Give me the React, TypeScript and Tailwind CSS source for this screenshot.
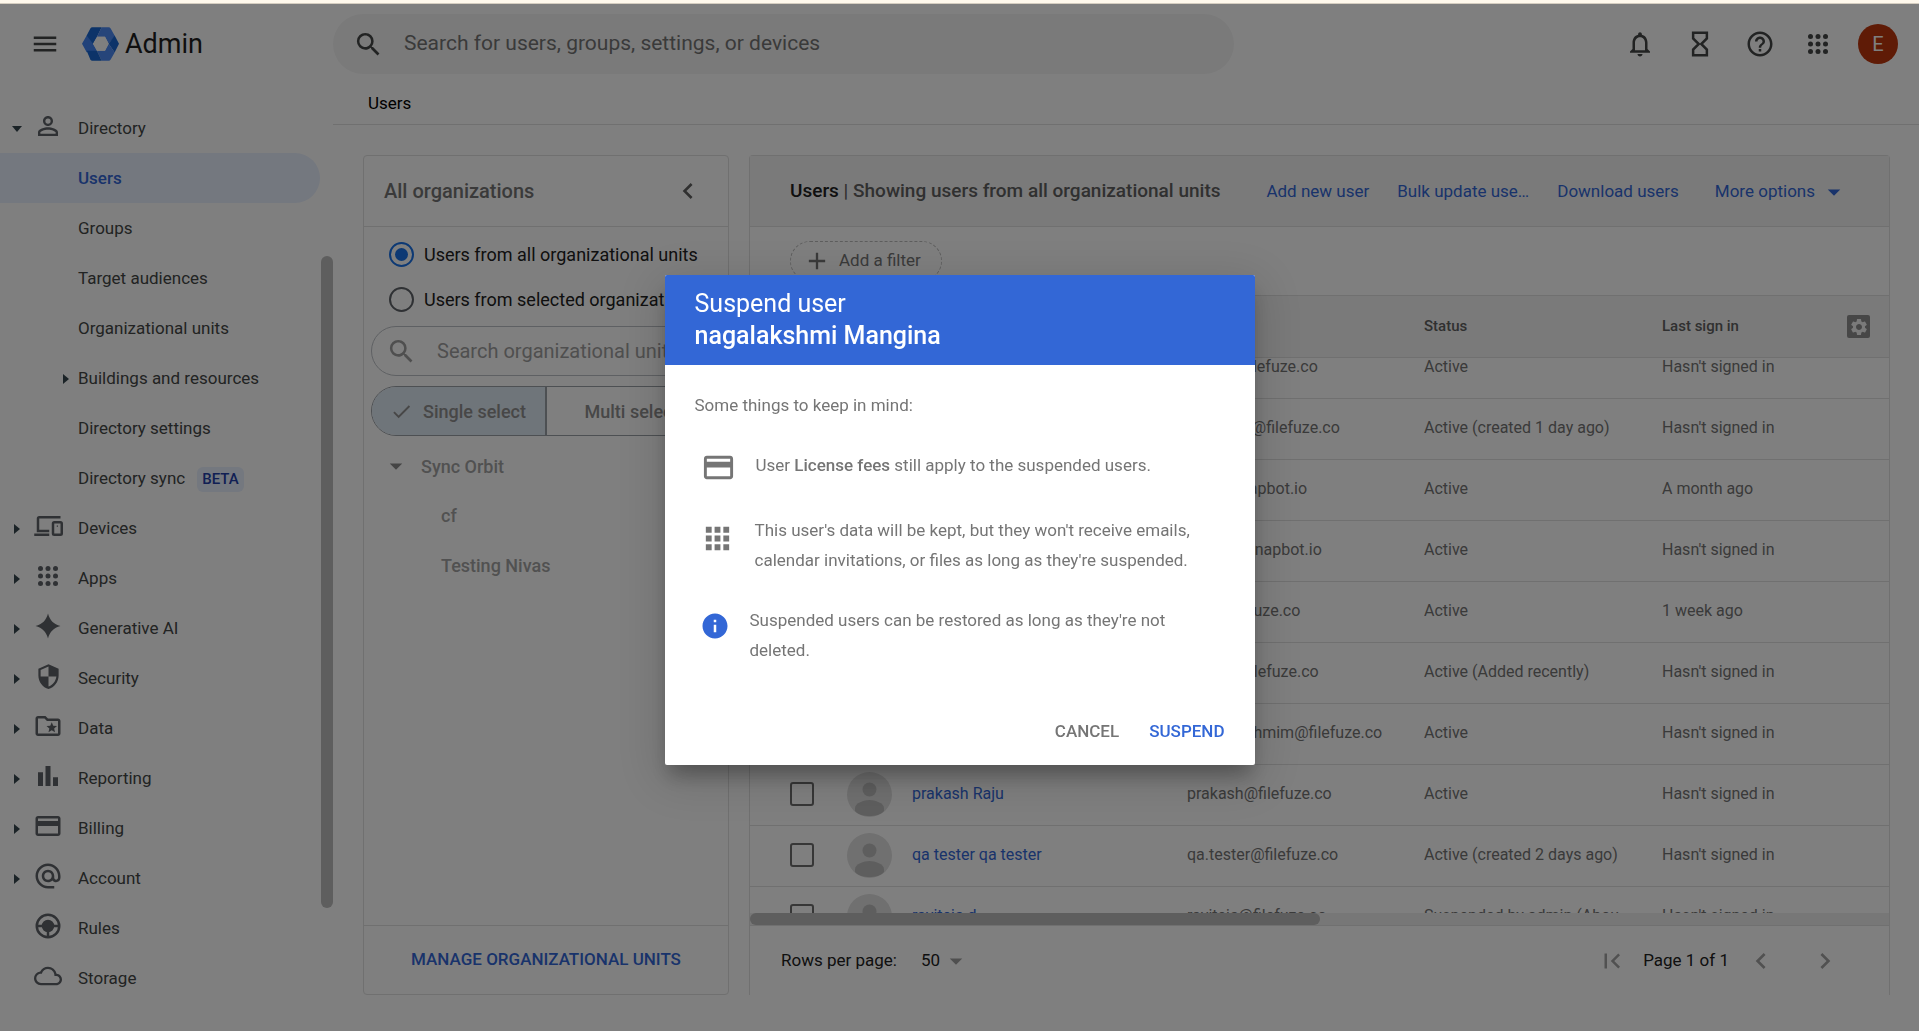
import { useLayoutEffect, useRef } from "react";
import type { ReactNode } from "react";
import clsx from "clsx";
import {
  MdAdd,
  MdAlternateEmail,
  MdApps,
  MdArrowDropDown,
  MdCheck,
  MdChevronLeft,
  MdChevronRight,
  MdCloudQueue,
  MdCreditCard,
  MdFirstPage,
  MdHelpOutline,
  MdInfo,
  MdMenu,
  MdNotificationsNone,
  MdOutlineFolderSpecial,
  MdPersonOutline,
  MdSearch,
  MdSecurity,
  MdSettings,
} from "react-icons/md";

const DotsIcon = () => (
  <svg width="30" height="30" viewBox="0 0 24 24" fill="currentColor">
    {[6, 12, 18].map((y) =>
      [6, 12, 18].map((x) => <circle key={`${x}-${y}`} cx={x} cy={y} r="2" />)
    )}
  </svg>
);

const SparkIcon = () => (
  <svg width="30" height="30" viewBox="0 0 24 24" fill="currentColor">
    <path d="M12 2c1.500 5.500 4.500 8.500 10 10-5.500 1.500-8.500 4.500-10 10-1.500-5.500-4.500-8.500-10-10 5.500-1.500 8.500-4.500 10-10z" />
  </svg>
);

const BarsIcon = () => (
  <svg width="30" height="30" viewBox="0 0 24 24" fill="currentColor">
    <path d="M4 9h4v11H4zM10 4h4v16h-4zM16 13h4v7h-4z" />
  </svg>
);

// laptop outline with a small phone in front of it
const DevicesIcon = () => (
  <svg
    width="30"
    height="30"
    viewBox="0 0 24 24"
    fill="none"
    stroke="currentColor"
    strokeWidth="2"
  >
    <path d="M22 5H5a1 1 0 0 0-1 1v11M1 19h12M4 16h9" />
    <rect x="16" y="9" width="7" height="10" rx="1" />
    <path d="M19 12h1" strokeWidth="1" />
  </svg>
);

const WheelIcon = () => (
  <svg
    width="30"
    height="30"
    viewBox="0 0 24 24"
    fill="none"
    stroke="currentColor"
    strokeWidth="2"
  >
    <circle cx="12" cy="12" r="9" />
    <path d="M3 12h18M12 12v9" />
    <circle cx="12" cy="12" r="4" fill="currentColor" />
  </svg>
);

const HourglassIcon = () => (
  <svg
    width="30"
    height="30"
    viewBox="0 0 24 24"
    fill="none"
    stroke="currentColor"
    strokeWidth="2"
  >
    <path d="M6.500 3h11v4.500L13 12l4.500 4.500V21h-11v-4.500L11 12 6.500 7.500z" />
  </svg>
);

const Logo = () => (
  <svg width="37" height="34" viewBox="0 0 111 101">
    <path fill="#4285f4" d="M0 50l14-25 31 4-12 21 12 21-31 4z" />
    <path fill="#1967d2" d="M14 25L25 4q2-4 6-4h28L45 29 33 50z" />
    <path fill="#4c8bf5" d="M59 0h21q4 0 6 4l13 23-19 23-11-21H45z" />
    <path fill="#1967d2" d="M98 25l13 25-13 26-18-26z" />
    <path fill="#4c8bf5" d="M80 50l18 26-12 21q-2 4-6 4H59L45 71h24z" />
    <path fill="#1967d2" d="M14 71h31l14 30H31q-4 0-6-4z" />
    <path fill="#fff" d="M33 50l12-21h24l11 21-11 21H45z" />
  </svg>
);

const Caret = ({ open }: { open?: boolean }) => (
  <svg width="10" height="10" viewBox="0 0 10 10" fill="#37474f">
    {open ? <path d="M0 2h10L5 8z" /> : <path d="M2 0v10l6-5z" />}
  </svg>
);

const PersonAvatar = () => (
  <svg width="45" height="45" viewBox="0 0 45 45">
    <clipPath id="face">
      <circle cx="22.500" cy="22.500" r="22.500" />
    </clipPath>
    <circle cx="22.500" cy="22.500" r="22.500" fill="#e0e0e0" />
    <g clipPath="url(#face)" fill="#bdbdbd">
      <circle cx="22.500" cy="17.500" r="7" />
      <path d="M8 39v-3c0-5 9-8 14.500-8S37 31 37 36v3c-3 4-9 5-14.500 5S11 43 8 39z" />
    </g>
  </svg>
);

type NavItem = {
  label: string;
  icon?: ReactNode;
  caret?: "open" | "closed";
  active?: boolean;
  beta?: boolean;
};

const navItems: NavItem[] = [
  { label: "Directory", icon: <MdPersonOutline size={30} />, caret: "open" },
  { label: "Users", active: true },
  { label: "Groups" },
  { label: "Target audiences" },
  { label: "Organizational units" },
  { label: "Buildings and resources", caret: "closed" },
  { label: "Directory settings" },
  { label: "Directory sync", beta: true },
  { label: "Devices", icon: <DevicesIcon />, caret: "closed" },
  { label: "Apps", icon: <DotsIcon />, caret: "closed" },
  { label: "Generative AI", icon: <SparkIcon />, caret: "closed" },
  { label: "Security", icon: <MdSecurity size={27} />, caret: "closed" },
  { label: "Data", icon: <MdOutlineFolderSpecial size={30} />, caret: "closed" },
  { label: "Reporting", icon: <BarsIcon />, caret: "closed" },
  { label: "Billing", icon: <MdCreditCard size={30} />, caret: "closed" },
  { label: "Account", icon: <MdAlternateEmail size={30} />, caret: "closed" },
  { label: "Rules", icon: <WheelIcon /> },
  { label: "Storage", icon: <MdCloudQueue size={28} /> },
];

const users = [
  ["Pavan Kumar", "pavan@filefuze.co", "Active", "Hasn't signed in"],
  ["nagalakshmi Mangina", "praveena@filefuze.co", "Active (created 1 day ago)", "Hasn't signed in"],
  ["Abhi R", "abhi@snapbot.io", "Active", "A month ago"],
  ["Kumar S", "kumar@snapbot.io", "Active", "Hasn't signed in"],
  ["Ravi K", "ravi@filefuze.co", "Active", "1 week ago"],
  ["Kishor P", "kishor@filefuze.co", "Active (Added recently)", "Hasn't signed in"],
  ["Sultana Tahmim", "sultanatahmim@filefuze.co", "Active", "Hasn't signed in"],
  ["prakash Raju", "prakash@filefuze.co", "Active", "Hasn't signed in"],
  ["qa tester qa tester", "qa.tester@filefuze.co", "Active (created 2 days ago)", "Hasn't signed in"],
  ["raviteja d", "raviteja@filefuze.co", "Suspended by admin (About 1 month ago)", "Hasn't signed in"],
];

const Header = () => (
  <header className="flex h-20 shrink-0 items-center">
    <div className="flex w-[333px] shrink-0 items-center pl-[30px]">
      <button aria-label="Main menu" className="text-[#444746]">
        <MdMenu size={30} />
      </button>
      <a href="#" className="ml-[22px] flex items-center gap-1.5">
        <Logo />
        <span className="text-[27px] leading-8 text-[#1f1f1f]">Admin</span>
      </a>
    </div>
    <div className="flex h-[60px] w-[901px] items-center rounded-full bg-[#f5f5f5] pl-5">
      <MdSearch size={31} className="text-[#444746]" />
      <input
        aria-label="Search"
        placeholder="Search for users, groups, settings, or devices"
        className="ml-5 flex-1 bg-transparent text-[21px] text-[#1f1f1f] outline-none placeholder:text-[#757575]"
      />
    </div>
    <div className="ml-auto flex items-center gap-7 pr-[21px] text-[#444746]">
      <div className="flex items-center gap-[30px]">
        <button aria-label="Notifications">
          <MdNotificationsNone size={30} />
        </button>
        <button aria-label="Tasks">
          <HourglassIcon />
        </button>
        <button aria-label="Help">
          <MdHelpOutline size={30} />
        </button>
      </div>
      <div className="flex items-center gap-[25px]">
        <button aria-label="Google apps">
          <DotsIcon />
        </button>
        <button className="size-10 rounded-full bg-[#bf360c] text-xl text-white">
          E
        </button>
      </div>
    </div>
  </header>
);

const Sidebar = () => (
  <div className="flex w-[333px] shrink-0 justify-between overflow-hidden">
    <nav className="w-80 pt-[19px]">
      {navItems.map(({ label, icon, caret, active, beta }) => (
        <a
          key={label}
          href="#"
          className={clsx(
            "flex h-[50px] items-center rounded-r-full pt-0.5 text-[17px]",
            active
              ? "bg-[#e8f0fe] font-medium text-[#3367d6]"
              : "text-[#444746]"
          )}
        >
          {icon || !caret ? (
            <>
              <span className="flex w-[33px] justify-center">
                {caret && <Caret open={caret === "open"} />}
              </span>
              <span className="mb-1.5 flex w-[30px] justify-center text-[#5f6368]">
                {icon}
              </span>
              <span className="w-[15px]" />
            </>
          ) : (
            <span className="flex w-[78px] justify-end pr-[7px]">
              <Caret />
            </span>
          )}
          {label}
          {beta && (
            <span className="ml-3 rounded-md bg-[#e8f0fe] px-[5px] text-[15px] leading-[25px] font-medium text-[#233fa9]">
              BETA
            </span>
          )}
        </a>
      ))}
    </nav>
    <div className="w-3 pt-[172px]">
      <div className="h-[652px] rounded-full bg-[#bcbcbc]" />
    </div>
  </div>
);

const OrgPanel = () => (
  <section className="flex w-[366px] shrink-0 flex-col rounded border border-[#e0e0e0]">
    <div className="flex h-[71px] items-center justify-between border-b border-[#e0e0e0] pr-6 pl-5">
      <h2 className="text-xl font-medium text-[#757575]">All organizations</h2>
      <button aria-label="Collapse" className="text-[#616161]">
        <MdChevronLeft size={32} />
      </button>
    </div>
    <div className="flex flex-1 flex-col px-[7px] pt-[5px]">
      {["Users from all organizational units", "Users from selected organizational units"].map(
        (label, i) => (
          <label
            key={label}
            className="flex h-[45px] items-center gap-2.5 pl-[18px] text-[18px] whitespace-nowrap text-[#212121]"
          >
            <input
              type="radio"
              name="scope"
              defaultChecked={i === 0}
              className="grid size-[25px] shrink-0 appearance-none place-items-center rounded-full border-2 border-[#5f6368] checked:border-[#1a73e8] checked:before:size-[13px] checked:before:rounded-full checked:before:bg-[#1a73e8] checked:before:content-['']"
            />
            <span>{label}</span>
          </label>
        )
      )}
      <div className="mt-1 flex h-[50px] shrink-0 items-center rounded-full border border-[#bdc1c6] pl-3.5 text-[#9e9e9e]">
        <MdSearch size={31} />
        <input
          aria-label="Search organizational units"
          placeholder="Search organizational units"
          className="ml-5 min-w-0 flex-1 bg-transparent text-xl outline-none placeholder:text-[#9e9e9e]"
        />
      </div>
      <div className="mt-2.5 flex h-[50px] shrink-0 overflow-hidden rounded-full border border-[#9aa0a6] text-[18px] font-medium text-[#8f8f8f]">
        <button className="flex w-[175px] items-center border-r-2 border-[#9aa0a6] bg-[#dfeaf4] pl-[18px]">
          <MdCheck size={23} />
          <span className="ml-2.5">Single select</span>
        </button>
        <button className="flex-1 pr-1">Multi select</button>
      </div>
      <ul className="mt-1.5 text-[18px] font-medium text-[#a3a3a3]">
        <li>
          <span className="flex h-12 items-center">
            <MdArrowDropDown size={30} className="ml-2.5 text-[#8a8a8a]" />
            <span className="ml-2.5">Sync Orbit</span>
          </span>
          <ul className="pl-[70px]">
            <li className="flex h-[50px] items-center">cf</li>
            <li className="flex h-[50px] items-center">Testing Nivas</li>
          </ul>
        </li>
      </ul>
    </div>
    <div className="flex h-[69px] items-center justify-center border-t border-[#e0e0e0]">
      <button className="text-[17px] font-medium text-[#3367d6]">
        MANAGE ORGANIZATIONAL UNITS
      </button>
    </div>
  </section>
);

const UsersTable = () => {
  const scroller = useRef<HTMLDivElement>(null);

  useLayoutEffect(() => {
    if (scroller.current) scroller.current.scrollTop = 20;
  }, []);

  return (
    <div
      ref={scroller}
      className="min-h-0 flex-1 overflow-x-hidden overflow-y-auto [scrollbar-width:none]"
    >
      <table className="w-full table-fixed border-separate border-spacing-0 text-left text-[16px] text-[#757575]">
        <thead className="sticky top-0 z-10 bg-[#f5f5f5] text-[15px] text-[#616161] [&_th]:h-[62px] [&_th]:border-b [&_th]:border-[#e0e0e0] [&_th]:p-0 [&_th]:font-medium">
          <tr>
            <th className="w-[97px]" />
            <th className="w-[65px]" />
            <th className="w-[275px]">Name</th>
            <th className="w-[237px]">Email</th>
            <th className="w-[238px]">Status</th>
            <th>
              <div className="flex items-center justify-between pr-[19px]">
                Last sign in
                <button
                  aria-label="Manage columns"
                  className="flex size-[23px] items-center justify-center rounded-xs bg-[#8f8f8f] text-[#f5f5f5]"
                >
                  <MdSettings size={20} />
                </button>
              </div>
            </th>
          </tr>
        </thead>
        <tbody className="[&_td]:h-[61px] [&_td]:border-b [&_td]:border-[#e0e0e0] [&_td]:px-0 [&_td]:pt-0 [&_td]:pb-0.5">
          {users.map(([name, email, status, lastSignIn]) => (
            <tr key={email}>
              <td className="pl-10!">
                <input
                  type="checkbox"
                  aria-label={`Select ${name}`}
                  className="block size-6 appearance-none rounded-[3px] border-2 border-[#6e6e6e]"
                />
              </td>
              <td>
                <PersonAvatar />
              </td>
              <td>
                <a href="#" className="text-[#3367d6]">
                  {name}
                </a>
              </td>
              <td>{email}</td>
              <td className="truncate pr-7!">{status}</td>
              <td>{lastSignIn}</td>
            </tr>
          ))}
        </tbody>
      </table>
    </div>
  );
};

const UsersPanel = () => (
  <section className="flex min-w-0 flex-1 flex-col rounded-t border border-b-0 border-[#e0e0e0]">
    <div className="flex h-[71px] shrink-0 items-center justify-between border-b border-[#e0e0e0] bg-[#f5f5f5] pr-10 pl-10 whitespace-nowrap">
      <h1 className="text-[19px] font-medium text-[#616161]">
        <span className="text-[#212121]">Users</span> | Showing users from all
        organizational units
      </h1>
      <div className="flex items-center pt-0.5 text-[17px] text-[#3367d6]">
        <a href="#">Add new user</a>
        <a href="#" className="ml-7">
          Bulk update use…
        </a>
        <a href="#" className="ml-7">
          Download users
        </a>
        <button className="ml-9 flex items-center gap-1">
          More options
          <MdArrowDropDown size={30} />
        </button>
      </div>
    </div>
    <div className="flex h-[69px] shrink-0 items-center border-b border-[#e0e0e0] pl-10">
      <button className="flex h-10 items-center gap-2 rounded-full border border-dashed border-[#bdbdbd] pr-5 pl-3 text-[17px] text-[#757575]">
        <MdAdd size={28} />
        Add a filter
      </button>
    </div>
    <UsersTable />
    <div className="h-[13px] shrink-0 border-b border-[#e0e0e0] bg-[#eeeeee]">
      <div className="h-full w-1/2 rounded-full bg-[#bcbcbc]" />
    </div>
    <div className="flex h-[69px] shrink-0 items-center justify-between pr-12 pl-[31px] text-[17px] text-[#212121]">
      <label className="flex items-center gap-6">
        Rows per page:
        <span className="flex items-center">
          <select className="appearance-none bg-transparent">
            <option>50</option>
          </select>
          <MdArrowDropDown size={30} className="text-[#9e9e9e]" />
        </span>
      </label>
      <div className="flex items-center">
        <button aria-label="First page" className="text-[#a3a3a3]">
          <MdFirstPage size={30} />
        </button>
        <span className="ml-4">Page 1 of 1</span>
        <button aria-label="Previous page" className="ml-4 text-[#a3a3a3]">
          <MdChevronLeft size={32} />
        </button>
        <button aria-label="Next page" className="ml-8 text-[#a3a3a3]">
          <MdChevronRight size={32} />
        </button>
      </div>
    </div>
  </section>
);

const SuspendDialog = () => (
  <div
    role="dialog"
    aria-modal="true"
    aria-labelledby="suspend-title"
    className="w-[590px] overflow-hidden rounded-xs bg-white text-[#757575] shadow-[0_14px_19px_rgba(0,0,0,0.14),0_11px_48px_10px_rgba(0,0,0,0.12),0_14px_19px_-9px_rgba(0,0,0,0.2)]"
  >
    <h2
      id="suspend-title"
      className="flex h-[90px] flex-col justify-center bg-[#3367d6] px-[30px] text-[25px] leading-8 text-white"
    >
      <span>Suspend user</span>
      <span className="font-medium">nagalakshmi Mangina</span>
    </h2>
    <div className="px-[30px] pt-[25px] text-[17px] leading-[30px]">
      <p>Some things to keep in mind:</p>
      <div className="mt-[30px] flex gap-5 pl-1.5">
        <MdCreditCard size={35} className="shrink-0" />
        <p>
          User <b className="font-medium">License fees</b> still apply to the
          suspended users.
        </p>
      </div>
      <div className="mt-[30px] flex gap-5 pl-[5px]">
        <MdApps size={35} className="mt-1.5 shrink-0" />
        <p>
          This user's data will be kept, but they won't receive emails,
          calendar invitations, or files as long as they're suspended.
        </p>
      </div>
      <div className="mt-[30px] flex gap-5 pl-[5px]">
        <MdInfo size={30} className="mt-1.5 shrink-0 text-[#3367d6]" />
        <p>Suspended users can be restored as long as they're not deleted.</p>
      </div>
    </div>
    <div className="mt-[34px] flex h-[66px] items-center justify-end gap-[30px] pr-[30px] text-[17px] font-medium">
      <button>CANCEL</button>
      <button className="text-[#3367d6]">SUSPEND</button>
    </div>
  </div>
);

const App = () => {
  return (
    <div className="flex h-screen flex-col overflow-hidden bg-white font-['Roboto',sans-serif]">
      <div className="h-1 shrink-0 border-b border-[#d5cdc0] bg-[#fff8ec]" />
      <Header />
      <div className="flex min-h-0 flex-1">
        <Sidebar />
        <main className="flex min-w-0 flex-1 flex-col">
          <div className="flex h-[41px] shrink-0 items-center border-b border-[#e0e0e0] pl-[35px] text-[17px] text-black">
            Users
          </div>
          <div className="flex min-h-0 flex-1 gap-5 pt-[30px] pr-[29px] pb-9 pl-[30px]">
            <OrgPanel />
            <UsersPanel />
          </div>
        </main>
      </div>
      <div className="fixed inset-0 top-1 z-20 flex items-center justify-center bg-black/50 pt-1">
        <SuspendDialog />
      </div>
    </div>
  );
};

export default App;
